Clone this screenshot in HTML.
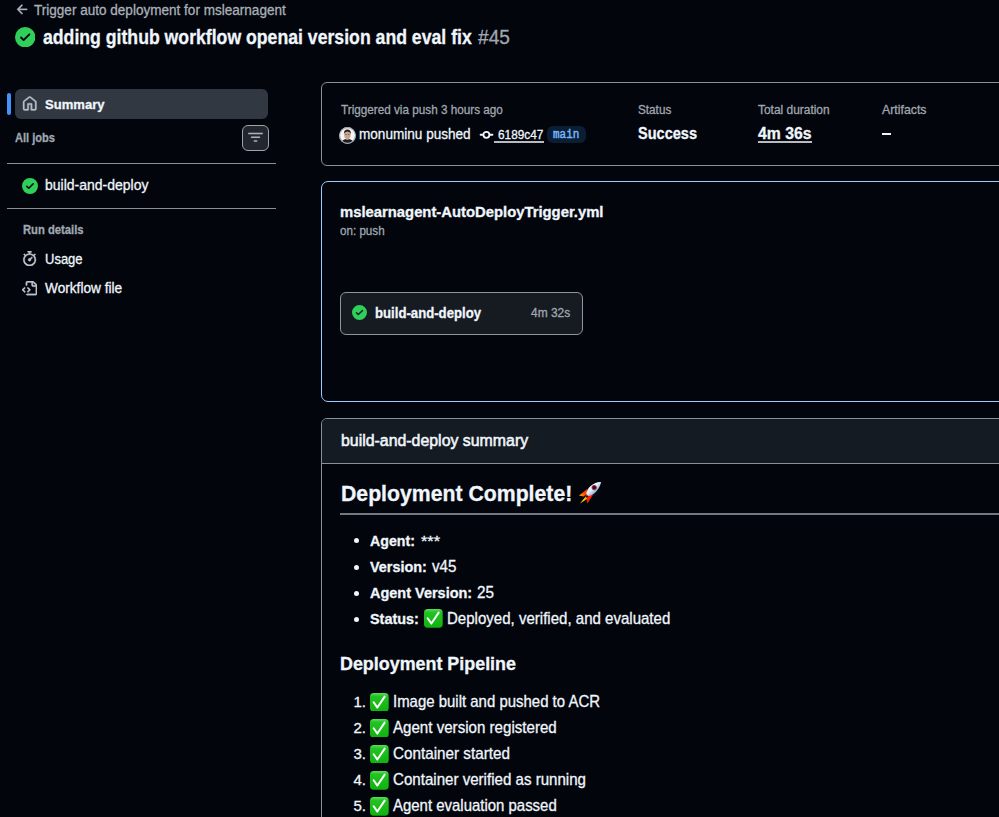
<!DOCTYPE html>
<html><head><meta charset="utf-8"><title>adding github workflow openai version and eval fix</title><style>
html,body{margin:0;padding:0;}
body{width:999px;height:817px;overflow:hidden;background:#02050c;position:relative;font-family:"Liberation Sans",sans-serif;}
.t{position:absolute;white-space:nowrap;line-height:1;-webkit-text-stroke:0.3px currentColor;}
.abs{position:absolute;box-sizing:border-box;display:block;}
</style></head><body>
<svg class="abs" style="left:14.9px;top:2.4px;" width="15.2" height="15.2" viewBox="0 0 16 16"><path fill="#a9b0b8" stroke="#a9b0b8" stroke-width="0.35" d="M7.78 12.53a.75.75 0 0 1-1.06 0L2.47 8.28a.75.75 0 0 1 0-1.06l4.25-4.25a.751.751 0 0 1 1.042.018.751.751 0 0 1 .018 1.042L4.81 7h7.440a.75.75 0 0 1 0 1.5H4.81l2.97 2.97a.75.75 0 0 1 0 1.06Z"/></svg>
<div class="t" style="left:34.00px;top:3.80px;font-size:13.95px;font-weight:400;color:#a9b0b8;font-family:'Liberation Sans', sans-serif;transform:scaleX(0.9720);transform-origin:0.00px 0;">Trigger auto deployment for mslearnagent</div>
<svg class="abs" style="left:14.8px;top:26.8px;" width="20.4" height="20.4" viewBox="0 0 16 16"><path fill="#2fcf5a" d="M8 16A8 8 0 1 1 8 0a8 8 0 0 1 0 16Zm3.78-9.72a.751.751 0 0 0-.018-1.042.751.751 0 0 0-1.042-.018L6.75 9.19 5.28 7.72a.751.751 0 0 0-1.042.018.751.751 0 0 0-.018 1.042l2 2a.75.75 0 0 0 1.060 0Z"/></svg>
<div class="t" style="left:43.00px;top:26.80px;font-size:20.2px;font-weight:700;color:#f0f6fc;font-family:'Liberation Sans', sans-serif;transform:scaleX(0.8747);transform-origin:0.00px 0;">adding github workflow openai version and eval fix</div>
<div class="t" style="left:477.50px;top:27.80px;font-size:19.5px;font-weight:400;color:#a0a7b0;font-family:'Liberation Sans', sans-serif;transform:scaleX(0.9808);transform-origin:0.00px 0;">#45</div>
<div class="abs" style="left:7px;top:93px;width:4px;height:22px;background:#4493f8;border-radius:2px;"></div>
<div class="abs" style="left:15px;top:89px;width:253px;height:30px;background:#323842;border-radius:6px;"></div>
<svg class="abs" style="left:22px;top:96.1px;" width="15.5" height="15.5" viewBox="0 0 16 16"><path fill="#b8bec8" stroke="#b8bec8" stroke-width="0.35" d="M6.906.664a1.749 1.749 0 0 1 2.187 0l5.25 4.2c.415.332.657.835.657 1.367v7.019A1.75 1.75 0 0 1 13.25 15h-3.5a.75.75 0 0 1-.75-.75V9H7v5.25a.75.75 0 0 1-.75.75h-3.5A1.75 1.75 0 0 1 1 13.25V6.23c0-.531.242-1.034.657-1.366l5.25-4.2Zm1.25 1.171a.25.25 0 0 0-.312 0l-5.25 4.2a.25.25 0 0 0-.094.196v7.019c0 .138.112.25.25.25H5.5V8.250a.75.75 0 0 1 .75-.75h3.5a.75.75 0 0 1 .75.75v5.25h2.75a.25.25 0 0 0 .25-.25V6.23a.25.25 0 0 0-.094-.195Z"/></svg>
<div class="t" style="left:45.00px;top:97.80px;font-size:13.1px;font-weight:700;color:#f0f6fc;font-family:'Liberation Sans', sans-serif;transform:scaleX(0.9965);transform-origin:0.00px 0;">Summary</div>
<div class="t" style="left:15.00px;top:131.50px;font-size:12.5px;font-weight:700;color:#a0a7b0;font-family:'Liberation Sans', sans-serif;transform:scaleX(0.8862);transform-origin:0.00px 0;">All jobs</div>
<div class="abs" style="left:242px;top:124.6px;width:27px;height:26.4px;background:#22262e;border:1.5px solid #9ea4ac;border-radius:6px;"></div>
<svg class="abs" style="left:247.9px;top:130.2px;" width="15" height="15" viewBox="0 0 16 16"><path fill="#aab0b8" stroke="#aab0b8" stroke-width="0.12" d="M.75 3h14.5a.75.75 0 0 1 0 1.5H.75a.75.75 0 0 1 0-1.5ZM3 7.75A.75.75 0 0 1 3.75 7h8.5a.75.75 0 0 1 0 1.5h-8.5A.75.75 0 0 1 3 7.75Zm3 4a.75.75 0 0 1 .75-.75h2.5a.75.75 0 0 1 0 1.5h-2.5a.75.75 0 0 1-.75-.75Z"/></svg>
<div class="abs" style="left:7px;top:163px;width:269px;height:1.4px;background:#8a9098;"></div>
<svg class="abs" style="left:22px;top:178px;" width="16" height="16" viewBox="0 0 16 16"><path fill="#2fcf5a" d="M8 16A8 8 0 1 1 8 0a8 8 0 0 1 0 16Zm3.78-9.72a.751.751 0 0 0-.018-1.042.751.751 0 0 0-1.042-.018L6.75 9.19 5.28 7.72a.751.751 0 0 0-1.042.018.751.751 0 0 0-.018 1.042l2 2a.75.75 0 0 0 1.060 0Z"/></svg>
<div class="t" style="left:45.00px;top:178.30px;font-size:14.73px;font-weight:400;color:#f0f6fc;font-family:'Liberation Sans', sans-serif;transform:scaleX(0.9512);transform-origin:0.00px 0;">build-and-deploy</div>
<div class="abs" style="left:7px;top:208px;width:269px;height:1.4px;background:#8a9098;"></div>
<div class="t" style="left:23.00px;top:223.80px;font-size:12.5px;font-weight:700;color:#a0a7b0;font-family:'Liberation Sans', sans-serif;transform:scaleX(0.8980);transform-origin:0.00px 0;">Run details</div>
<svg class="abs" style="left:22.3px;top:251px;" width="15.2" height="15.2" viewBox="0 0 16 16"><path fill="#c0c6ce" stroke="#c0c6ce" stroke-width="0.35" d="M5.75.75A.75.75 0 0 1 6.5 0h3a.75.75 0 0 1 0 1.5h-.75v1l-.001.041a6.724 6.724 0 0 1 3.464 1.435l.007-.006.75-.75a.749.749 0 0 1 1.275.326.749.749 0 0 1-.215.734l-.75.75-.006.007a6.75 6.75 0 1 1-10.548 0L2.72 5.03l-.75-.75a.751.751 0 0 1 .018-1.042.751.751 0 0 1 1.042-.018l.75.75.007.006A6.72 6.72 0 0 1 7.25 2.541V1.5H6.5a.75.75 0 0 1-.75-.75ZM8 14.5a5.25 5.25 0 1 0-.001-10.501A5.25 5.25 0 0 0 8 14.5Zm.389-6.7 1.33-1.33a.75.75 0 1 1 1.061 1.06L9.45 8.861A1.503 1.503 0 0 1 8 10.750a1.499 1.499 0 1 1 .389-2.950Z"/></svg>
<div class="t" style="left:45.00px;top:251.80px;font-size:14.2px;font-weight:400;color:#f0f6fc;font-family:'Liberation Sans', sans-serif;transform:scaleX(0.9159);transform-origin:0.00px 0;">Usage</div>
<svg class="abs" style="left:22px;top:281px;" width="15.2" height="15.2" viewBox="0 0 16 16"><path fill="#c0c6ce" stroke="#c0c6ce" stroke-width="0.35" d="M4 1.75C4 .784 4.784 0 5.75 0h5.586c.464 0 .909.184 1.237.513l2.914 2.914c.329.328.513.773.513 1.237v8.586A1.75 1.75 0 0 1 14.25 15h-9a.75.75 0 0 1 0-1.5h9a.25.25 0 0 0 .25-.25V6h-2.75A1.75 1.75 0 0 1 10 4.25V1.5H5.75a.25.25 0 0 0-.25.25v2.5a.75.75 0 0 1-1.5 0Zm1.72 4.97a.75.75 0 0 1 1.060 0l2 2a.75.75 0 0 1 0 1.060l-2 2a.749.749 0 0 1-1.275-.326.749.749 0 0 1 .215-.734l1.470-1.470-1.470-1.470a.75.75 0 0 1 0-1.060ZM3.28 7.78 1.81 9.25l1.47 1.47a.751.751 0 0 1-.018 1.042.751.751 0 0 1-1.042.018l-2-2a.75.75 0 0 1 0-1.060l2-2a.751.751 0 0 1 1.042.018.751.751 0 0 1 .018 1.042Zm8.22-6.218V4.25c0 .138.112.25.25.25h2.688l-.011-.013-2.914-2.914-.013-.011Z"/></svg>
<div class="t" style="left:45.00px;top:281.20px;font-size:14.2px;font-weight:400;color:#f0f6fc;font-family:'Liberation Sans', sans-serif;transform:scaleX(0.9624);transform-origin:0.00px 0;">Workflow file</div>
<div class="abs" style="left:321px;top:82px;width:760px;height:84px;border:1.5px solid #8a9098;border-radius:6px;"></div>
<div class="t" style="left:341.30px;top:103.80px;font-size:12.83px;font-weight:400;color:#a0a7b0;font-family:'Liberation Sans', sans-serif;transform:scaleX(0.9141);transform-origin:0.00px 0;">Triggered via push 3 hours ago</div>
<svg class="abs" style="left:339px;top:126.5px" width="17" height="17" viewBox="0 0 17 17"><defs><clipPath id="av"><circle cx="8.5" cy="8.5" r="8"/></clipPath></defs><circle cx="8.5" cy="8.5" r="8.2" fill="#f4f4f6"/><g clip-path="url(#av)"><path d="M1.5 17.5 Q2.5 12.2 8.4 11.8 Q14.3 12.2 15.5 17.5Z" fill="#1c1c1e"/><rect x="7.2" y="10" width="2.4" height="3" fill="#b89078"/><ellipse cx="8.4" cy="7.9" rx="3.2" ry="4.1" fill="#c9a38a"/><path d="M4.9 7 Q4.6 2.6 8.4 2.5 Q12.2 2.6 11.9 7 Q11.3 4.6 8.4 4.5 Q5.5 4.6 4.9 7Z" fill="#2a1f19"/><rect x="6.3" y="7.2" width="1.4" height="0.7" fill="#5a4032"/><rect x="9.1" y="7.2" width="1.4" height="0.7" fill="#5a4032"/></g><circle cx="8.5" cy="8.5" r="7.9" fill="none" stroke="#a0a6ae" stroke-width="1.1"/></svg>
<div class="t" style="left:359.30px;top:126.50px;font-size:14.91px;font-weight:400;color:#f0f6fc;font-family:'Liberation Sans', sans-serif;transform:scaleX(0.9105);transform-origin:0.00px 0;">monuminu pushed</div>
<svg class="abs" style="left:479px;top:129px" width="15" height="12" viewBox="0 0 15 12"><line x1="1.6" y1="5.8" x2="13.4" y2="5.8" stroke="#f0f6fc" stroke-width="1.9" stroke-linecap="round"/><circle cx="7.4" cy="5.8" r="3.0" fill="#02050c" stroke="#f0f6fc" stroke-width="1.8"/></svg>
<div class="t" style="left:497.60px;top:127.70px;font-size:13.41px;font-weight:400;color:#f0f6fc;font-family:'Liberation Sans', sans-serif;transform:scaleX(0.8823);transform-origin:0.00px 0;">6189c47</div>
<div class="abs" style="left:494px;top:141.3px;width:50px;height:1.5px;background:#b8bcc2;"></div>
<div class="abs" style="left:547px;top:126px;width:38.5px;height:16.5px;background:#0c1e33;border-radius:6px;"></div>
<div class="t" style="left:553.00px;top:128.80px;font-size:12px;font-weight:400;color:#74b9ff;font-family:'Liberation Mono', monospace;transform:scaleX(0.9132);transform-origin:0.00px 0;-webkit-text-stroke:0.45px currentColor;">main</div>
<div class="t" style="left:638.00px;top:104.00px;font-size:12.51px;font-weight:400;color:#a0a7b0;font-family:'Liberation Sans', sans-serif;transform:scaleX(0.9389);transform-origin:0.00px 0;">Status</div>
<div class="t" style="left:638.00px;top:125.00px;font-size:16.5px;font-weight:700;color:#f0f6fc;font-family:'Liberation Sans', sans-serif;transform:scaleX(0.8809);transform-origin:0.00px 0;">Success</div>
<div class="t" style="left:757.70px;top:104.00px;font-size:12.51px;font-weight:400;color:#a0a7b0;font-family:'Liberation Sans', sans-serif;transform:scaleX(0.9546);transform-origin:0.00px 0;">Total duration</div>
<div class="t" style="left:757.70px;top:125.00px;font-size:16.5px;font-weight:700;color:#f0f6fc;font-family:'Liberation Sans', sans-serif;transform:scaleX(0.9559);transform-origin:0.00px 0;">4m 36s</div>
<div class="abs" style="left:757.5px;top:141.3px;width:54px;height:1.6px;background:#b8bcc2;"></div>
<div class="t" style="left:882.20px;top:102.70px;font-size:13.04px;font-weight:400;color:#a0a7b0;font-family:'Liberation Sans', sans-serif;transform:scaleX(0.9448);transform-origin:0.00px 0;">Artifacts</div>
<div class="abs" style="left:882.3px;top:133px;width:8.8px;height:2.1px;background:#f0f6fc;"></div>
<div class="abs" style="left:321px;top:181px;width:760px;height:221px;border:1.8px solid #9dcbfb;border-radius:7px;"></div>
<div class="t" style="left:340.40px;top:204.70px;font-size:14.24px;font-weight:700;color:#f0f6fc;font-family:'Liberation Sans', sans-serif;transform:scaleX(1.0410);transform-origin:0.00px 0;">mslearnagent-AutoDeployTrigger.yml</div>
<div class="t" style="left:340.40px;top:224.90px;font-size:12.83px;font-weight:400;color:#a0a7b0;font-family:'Liberation Sans', sans-serif;transform:scaleX(0.9062);transform-origin:0.00px 0;">on: push</div>
<div class="abs" style="left:340px;top:291.5px;width:243px;height:43.5px;background:#161b22;border:1.6px solid #8f959d;border-radius:6px;"></div>
<svg class="abs" style="left:352px;top:305.2px;" width="15" height="15" viewBox="0 0 16 16"><path fill="#2fcf5a" d="M8 16A8 8 0 1 1 8 0a8 8 0 0 1 0 16Zm3.78-9.72a.751.751 0 0 0-.018-1.042.751.751 0 0 0-1.042-.018L6.75 9.19 5.28 7.72a.751.751 0 0 0-1.042.018.751.751 0 0 0-.018 1.042l2 2a.75.75 0 0 0 1.060 0Z"/></svg>
<div class="t" style="left:375.40px;top:305.80px;font-size:14.5px;font-weight:700;color:#f0f6fc;font-family:'Liberation Sans', sans-serif;transform:scaleX(0.9076);transform-origin:0.00px 0;">build-and-deploy</div>
<div class="t" style="left:530.80px;top:307.20px;font-size:12.83px;font-weight:400;color:#a0a7b0;font-family:'Liberation Sans', sans-serif;transform:scaleX(0.9318);transform-origin:0.00px 0;">4m 32s</div>
<div class="abs" style="left:321px;top:418px;width:760px;height:600px;border:1.5px solid #8a9098;border-radius:6px;overflow:hidden;"></div>
<div class="abs" style="left:322px;top:419px;width:760px;height:44px;background:#151b23;border-radius:5px 0 0 0;"></div>
<div class="abs" style="left:321px;top:463px;width:760px;height:1.4px;background:#8a9098;"></div>
<div class="t" style="left:340.50px;top:432.30px;font-size:16.43px;font-weight:400;color:#f0f6fc;font-family:'Liberation Sans', sans-serif;transform:scaleX(0.9670);transform-origin:0.00px 0;-webkit-text-stroke:0.55px currentColor;">build-and-deploy summary</div>
<div class="t" style="left:341.00px;top:483.30px;font-size:22.2px;font-weight:700;color:#f0f6fc;font-family:'Liberation Sans', sans-serif;transform:scaleX(0.9572);transform-origin:0.00px 0;">Deployment Complete!</div>
<svg class="abs" style="left:574px;top:478px" width="30" height="30" viewBox="0 0 30 30"><defs><linearGradient id="rb" x1="0.2" y1="0.2" x2="0.8" y2="0.8"><stop offset="0" stop-color="#ffffff"/><stop offset="0.45" stop-color="#e2ecf5"/><stop offset="0.75" stop-color="#8fb6e0"/><stop offset="1" stop-color="#3f78c0"/></linearGradient><linearGradient id="fl" x1="1" y1="0" x2="0" y2="1"><stop offset="0" stop-color="#ff1e00"/><stop offset="0.6" stop-color="#ff5a00"/><stop offset="1" stop-color="#ffd000"/></linearGradient><linearGradient id="fy" x1="1" y1="0" x2="0" y2="1"><stop offset="0" stop-color="#ff7a00"/><stop offset="0.5" stop-color="#ffd800"/><stop offset="1" stop-color="#ffe800"/></linearGradient></defs><path d="M13.2 11 L5 17.6 L9.6 18.4 L13.6 15.4Z" fill="url(#fl)"/><path d="M19.2 16.6 L13.4 25.4 L12.4 20.6 L15.2 16.8Z" fill="#ff2000"/><path d="M11.8 18.2 L6 25.4 L13.2 20.8Z" fill="url(#fy)"/><path d="M27 4.2 C24.5 3.6 19.5 5 15.8 8.8 C13.6 11 12.4 13.8 12.2 16.2 L14 18 C16.4 17.8 19.2 16.6 21.4 14.4 C25.2 10.6 26.6 6.6 27 4.2Z" fill="url(#rb)"/><path d="M12.2 16.2 L11.4 18.6 L14 18Z" fill="#d02a20"/><circle cx="20.2" cy="9.6" r="2.2" fill="#0e1e2e" stroke="#c81e28" stroke-width="1"/></svg>
<div class="abs" style="left:340px;top:513px;width:760px;height:1.5px;background:#737981;"></div>
<div class="abs" style="left:354.2px;top:538.2px;width:5px;height:5px;background:#f0f6fc;border-radius:50%;"></div>
<div class="abs" style="left:354.2px;top:564.5px;width:5px;height:5px;background:#f0f6fc;border-radius:50%;"></div>
<div class="abs" style="left:354.2px;top:590.5px;width:5px;height:5px;background:#f0f6fc;border-radius:50%;"></div>
<div class="abs" style="left:354.2px;top:616.7px;width:5px;height:5px;background:#f0f6fc;border-radius:50%;"></div>
<div class="t" style="left:370.40px;top:532.80px;font-size:15.1px;font-weight:700;color:#f0f6fc;font-family:'Liberation Sans', sans-serif;transform:scaleX(0.9392);transform-origin:0.00px 0;">Agent:</div>
<div class="t" style="left:420.90px;top:532.80px;font-size:15px;font-weight:400;color:#f0f6fc;font-family:'Liberation Sans', sans-serif;transform:scaleX(1.0911);transform-origin:0.00px 0;">***</div>
<div class="t" style="left:370.40px;top:558.90px;font-size:15.1px;font-weight:700;color:#f0f6fc;font-family:'Liberation Sans', sans-serif;transform:scaleX(0.9549);transform-origin:0.00px 0;">Version:</div>
<div class="t" style="left:431.60px;top:558.90px;font-size:15.9px;font-weight:400;color:#f0f6fc;font-family:'Liberation Sans', sans-serif;transform:scaleX(0.9520);transform-origin:0.00px 0;">v45</div>
<div class="t" style="left:370.40px;top:585.00px;font-size:15.1px;font-weight:700;color:#f0f6fc;font-family:'Liberation Sans', sans-serif;transform:scaleX(0.9591);transform-origin:0.00px 0;">Agent Version:</div>
<div class="t" style="left:477.00px;top:585.00px;font-size:15.9px;font-weight:400;color:#f0f6fc;font-family:'Liberation Sans', sans-serif;transform:scaleX(0.9615);transform-origin:0.00px 0;">25</div>
<div class="t" style="left:370.40px;top:611.10px;font-size:15.1px;font-weight:700;color:#f0f6fc;font-family:'Liberation Sans', sans-serif;transform:scaleX(0.9556);transform-origin:0.00px 0;">Status:</div>
<svg class="abs" style="left:424px;top:609.2px" width="18.7" height="18.7" viewBox="0 0 20 20"><defs><linearGradient id="eg" x1="0" y1="0" x2="0" y2="1"><stop offset="0" stop-color="#5fdc5f"/><stop offset="0.18" stop-color="#22c322"/><stop offset="1" stop-color="#0fb20f"/></linearGradient></defs><rect x="0" y="0" width="20" height="20" rx="4" fill="url(#eg)"/><path d="M3.9 9.9 L7.9 15.6 L15.7 3.9" fill="none" stroke="#fff" stroke-width="2.1" stroke-linecap="round" stroke-linejoin="round"/></svg>
<div class="t" style="left:447.00px;top:611.10px;font-size:15.9px;font-weight:400;color:#f0f6fc;font-family:'Liberation Sans', sans-serif;transform:scaleX(0.9466);transform-origin:0.00px 0;">Deployed, verified, and evaluated</div>
<div class="t" style="left:340.00px;top:656.30px;font-size:17.6px;font-weight:700;color:#f0f6fc;font-family:'Liberation Sans', sans-serif;transform:scaleX(1.0168);transform-origin:0.00px 0;">Deployment Pipeline</div>
<div class="t" style="left:353.50px;top:693.70px;font-size:15px;font-weight:400;color:#f0f6fc;font-family:'Liberation Sans', sans-serif;">1.</div>
<svg class="abs" style="left:370px;top:692.6px" width="18.7" height="18.7" viewBox="0 0 20 20"><defs><linearGradient id="eg" x1="0" y1="0" x2="0" y2="1"><stop offset="0" stop-color="#5fdc5f"/><stop offset="0.18" stop-color="#22c322"/><stop offset="1" stop-color="#0fb20f"/></linearGradient></defs><rect x="0" y="0" width="20" height="20" rx="4" fill="url(#eg)"/><path d="M3.9 9.9 L7.9 15.6 L15.7 3.9" fill="none" stroke="#fff" stroke-width="2.1" stroke-linecap="round" stroke-linejoin="round"/></svg>
<div class="t" style="left:393.20px;top:693.70px;font-size:15.79px;font-weight:400;color:#f0f6fc;font-family:'Liberation Sans', sans-serif;transform:scaleX(0.9475);transform-origin:0.00px 0;">Image built and pushed to ACR</div>
<div class="t" style="left:353.50px;top:719.80px;font-size:15px;font-weight:400;color:#f0f6fc;font-family:'Liberation Sans', sans-serif;">2.</div>
<svg class="abs" style="left:370px;top:718.7px" width="18.7" height="18.7" viewBox="0 0 20 20"><defs><linearGradient id="eg" x1="0" y1="0" x2="0" y2="1"><stop offset="0" stop-color="#5fdc5f"/><stop offset="0.18" stop-color="#22c322"/><stop offset="1" stop-color="#0fb20f"/></linearGradient></defs><rect x="0" y="0" width="20" height="20" rx="4" fill="url(#eg)"/><path d="M3.9 9.9 L7.9 15.6 L15.7 3.9" fill="none" stroke="#fff" stroke-width="2.1" stroke-linecap="round" stroke-linejoin="round"/></svg>
<div class="t" style="left:393.20px;top:719.80px;font-size:15.79px;font-weight:400;color:#f0f6fc;font-family:'Liberation Sans', sans-serif;transform:scaleX(0.9571);transform-origin:0.00px 0;">Agent version registered</div>
<div class="t" style="left:353.50px;top:745.90px;font-size:15px;font-weight:400;color:#f0f6fc;font-family:'Liberation Sans', sans-serif;">3.</div>
<svg class="abs" style="left:370px;top:744.8000000000001px" width="18.7" height="18.7" viewBox="0 0 20 20"><defs><linearGradient id="eg" x1="0" y1="0" x2="0" y2="1"><stop offset="0" stop-color="#5fdc5f"/><stop offset="0.18" stop-color="#22c322"/><stop offset="1" stop-color="#0fb20f"/></linearGradient></defs><rect x="0" y="0" width="20" height="20" rx="4" fill="url(#eg)"/><path d="M3.9 9.9 L7.9 15.6 L15.7 3.9" fill="none" stroke="#fff" stroke-width="2.1" stroke-linecap="round" stroke-linejoin="round"/></svg>
<div class="t" style="left:393.20px;top:745.90px;font-size:15.79px;font-weight:400;color:#f0f6fc;font-family:'Liberation Sans', sans-serif;transform:scaleX(0.9659);transform-origin:0.00px 0;">Container started</div>
<div class="t" style="left:353.50px;top:772.00px;font-size:15px;font-weight:400;color:#f0f6fc;font-family:'Liberation Sans', sans-serif;">4.</div>
<svg class="abs" style="left:370px;top:770.9000000000001px" width="18.7" height="18.7" viewBox="0 0 20 20"><defs><linearGradient id="eg" x1="0" y1="0" x2="0" y2="1"><stop offset="0" stop-color="#5fdc5f"/><stop offset="0.18" stop-color="#22c322"/><stop offset="1" stop-color="#0fb20f"/></linearGradient></defs><rect x="0" y="0" width="20" height="20" rx="4" fill="url(#eg)"/><path d="M3.9 9.9 L7.9 15.6 L15.7 3.9" fill="none" stroke="#fff" stroke-width="2.1" stroke-linecap="round" stroke-linejoin="round"/></svg>
<div class="t" style="left:393.20px;top:772.00px;font-size:15.79px;font-weight:400;color:#f0f6fc;font-family:'Liberation Sans', sans-serif;transform:scaleX(0.9565);transform-origin:0.00px 0;">Container verified as running</div>
<div class="t" style="left:353.50px;top:798.10px;font-size:15px;font-weight:400;color:#f0f6fc;font-family:'Liberation Sans', sans-serif;">5.</div>
<svg class="abs" style="left:370px;top:797.0px" width="18.7" height="18.7" viewBox="0 0 20 20"><defs><linearGradient id="eg" x1="0" y1="0" x2="0" y2="1"><stop offset="0" stop-color="#5fdc5f"/><stop offset="0.18" stop-color="#22c322"/><stop offset="1" stop-color="#0fb20f"/></linearGradient></defs><rect x="0" y="0" width="20" height="20" rx="4" fill="url(#eg)"/><path d="M3.9 9.9 L7.9 15.6 L15.7 3.9" fill="none" stroke="#fff" stroke-width="2.1" stroke-linecap="round" stroke-linejoin="round"/></svg>
<div class="t" style="left:393.20px;top:798.10px;font-size:15.79px;font-weight:400;color:#f0f6fc;font-family:'Liberation Sans', sans-serif;transform:scaleX(0.9471);transform-origin:0.00px 0;">Agent evaluation passed</div>

</body></html>
